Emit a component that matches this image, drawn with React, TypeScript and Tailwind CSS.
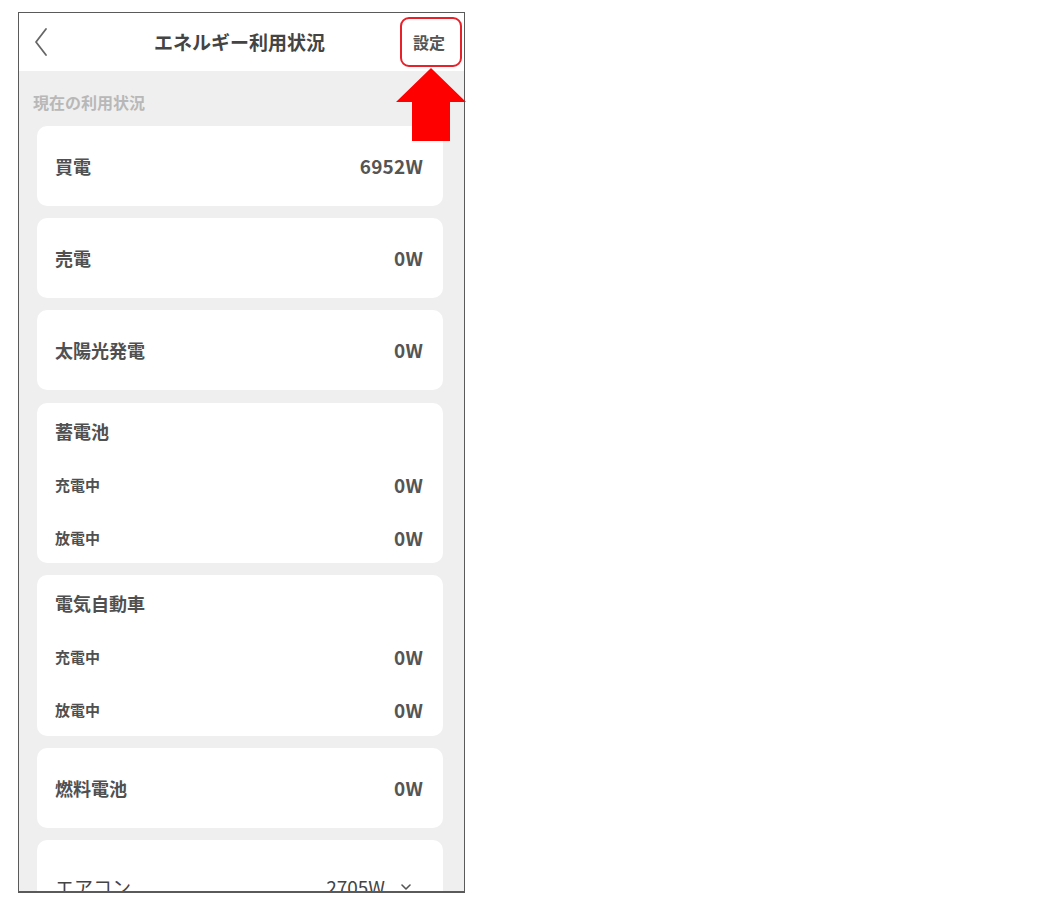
import React from "react";

const FONT = { fontFamily: '"Noto Sans CJK JP", "Noto Sans", sans-serif' };

function SimpleCard({ label, value, extra = "" }: { label: string; value: string; extra?: string }) {
  return (
    <div className={`flex h-[80px] items-center justify-between rounded-[10px] bg-white pl-[18px] pr-[20px] ${extra}`}>
      <span className="text-[18px] font-bold text-[#505050]">{label}</span>
      <span className="text-[19px] font-bold tracking-[0.2px] text-[#555]">{value}</span>
    </div>
  );
}

function GroupCard({ title, bottom = "pb-[14px]" }: { title: string; bottom?: string }) {
  return (
    <div className={`rounded-[10px] bg-white pl-[18px] pr-[20px] pt-[14px] ${bottom}`}>
      <div className="flex h-[28px] items-center text-[18px] font-bold text-[#505050]">
        {title}
      </div>
      <div className="mt-[29px] flex h-[22px] items-center justify-between">
        <span className="text-[15px] font-bold text-[#505050]">充電中</span>
        <span className="text-[19px] font-bold tracking-[0.2px] text-[#555]">0W</span>
      </div>
      <div className="mt-[31px] flex h-[22px] items-center justify-between">
        <span className="text-[15px] font-bold text-[#505050]">放電中</span>
        <span className="text-[19px] font-bold tracking-[0.2px] text-[#555]">0W</span>
      </div>
    </div>
  );
}

export default function App() {
  return (
    <div className="relative h-[906px] w-[1058px] bg-white pt-[12px]" style={FONT}>
      <div className="ml-[18px] h-[881px] w-[447px] overflow-hidden border border-b-2 border-[#5a5a5a] bg-[#efefef]">
        {/* header */}
        <div className="relative flex h-[58px] items-center justify-center bg-white">
          <svg
            className="absolute left-[14px] top-[14px]"
            width="16"
            height="30"
            viewBox="0 0 16 30"
            fill="none"
          >
            <path d="M13 2 L3 15 L13 28" stroke="#666" strokeWidth="1.8" strokeLinecap="round" strokeLinejoin="round" />
          </svg>
          <span className="ml-[-4px] text-[19px] font-bold text-[#444]">エネルギー利用状況</span>
          <span className="absolute left-[394px] text-[16px] font-bold text-[#555]">設定</span>
        </div>

        {/* body */}
        <div className="pt-[20px]">
          <div className="flex h-[22px] items-center pl-[14px] text-[16px] font-bold text-[#b8b8b8]">
            現在の利用状況
          </div>
          <div className="ml-[18px] mr-[21px] mt-[13px] flex flex-col gap-3">
            <SimpleCard label="買電" value="6952W" />
            <SimpleCard label="売電" value="0W" />
            <SimpleCard label="太陽光発電" value="0W" extra="mb-[1px]" />
            <GroupCard title="蓄電池" />
            <GroupCard title="電気自動車" bottom="pb-[15px]" />
            <SimpleCard label="燃料電池" value="0W" />
            <div className="h-[100px] rounded-[10px] bg-white pl-[18px] pr-[32px] pt-[36px]">
              <div className="flex h-[22px] items-center justify-between">
                <span className="text-[19px] text-[#444]">エアコン</span>
                <span className="flex items-center gap-[16px] text-[19px] text-[#444]">
                  2705W
                  <svg width="10" height="6" viewBox="0 0 10 6" fill="none">
                    <path d="M1 1 L5 5 L9 1" stroke="#555" strokeWidth="1.6" strokeLinecap="round" strokeLinejoin="round" />
                  </svg>
                </span>
              </div>
            </div>
          </div>
        </div>
      </div>

      {/* annotation: red box and arrow */}
      <div className="absolute left-[400px] top-[17px] h-[50px] w-[62px] rounded-[9px] border-2 border-[#e8202a]" />
      <svg className="absolute left-[396px] top-[68px]" width="70" height="74" viewBox="0 0 70 74">
        <path d="M35 0 L70 34 L54 34 L54 73 L16 73 L16 34 L0 34 Z" fill="#ff0000" />
      </svg>
    </div>
  );
}
